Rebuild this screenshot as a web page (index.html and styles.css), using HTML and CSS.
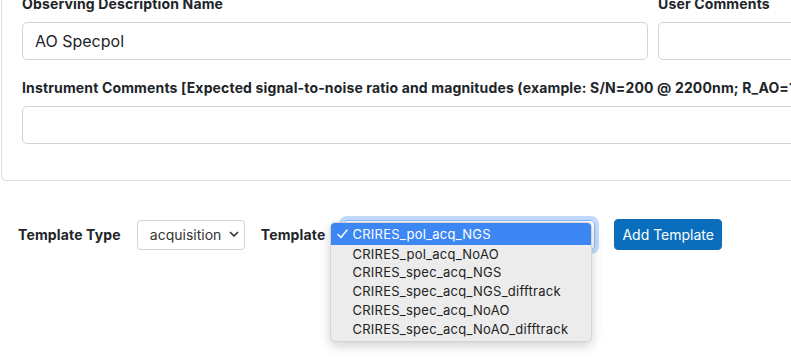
FILE: index.html
```html
<!DOCTYPE html>
<html>
  <head>
    <title>Observing Description</title>
    <link rel="stylesheet" href="styles.css">
  </head>
  <body>
    <div class="page">
      <div class="card">
        <div class="row">
          <div class="field name">
            <label>Observing Description Name</label>
            <div class="input">AO Specpol</div>
          </div>
          <div class="field user">
            <label>User Comments</label>
            <div class="input"></div>
          </div>
        </div>
        <div class="field comments">
          <label>Instrument Comments [Expected signal-to-noise ratio and magnitudes (example: S/N=200 @ 2200nm; R_AO=12; J=10)]</label>
          <div class="input"></div>
        </div>
      </div>

      <div class="toolbar">
        <label class="type-label">Template Type</label>
        <div class="select type-select">
          <span>acquisition</span>
          <svg width="10" height="7" viewBox="0 0 10 7"><path d="M1.5 1.5 L5 5 L8.5 1.5" fill="none" stroke="#333" stroke-width="1.7" stroke-linecap="round" stroke-linejoin="round"/></svg>
        </div>
        <label class="tpl-label">Template</label>
        <div class="select tpl-select">
          <span>CRIRES_pol_acq_NGS</span>
          <svg width="10" height="7" viewBox="0 0 10 7"><path d="M1.5 1.5 L5 5 L8.5 1.5" fill="none" stroke="#333" stroke-width="1.7" stroke-linecap="round" stroke-linejoin="round"/></svg>
          <ul class="menu">
            <li class="selected">
              <svg class="check" width="11" height="10" viewBox="0 0 11 10"><path d="M1 5.5 L4 8.5 L10 1" fill="none" stroke="#fff" stroke-width="1.5" stroke-linecap="round" stroke-linejoin="round"/></svg>
              CRIRES_pol_acq_NGS
            </li>
            <li>CRIRES_pol_acq_NoAO</li>
            <li>CRIRES_spec_acq_NGS</li>
            <li>CRIRES_spec_acq_NGS_difftrack</li>
            <li>CRIRES_spec_acq_NoAO</li>
            <li>CRIRES_spec_acq_NoAO_difftrack</li>
          </ul>
        </div>
        <button class="btn">Add Template</button>
      </div>
    </div>
  </body>
</html>
```

FILE: styles.css
```css
body{
    margin: 0;
    font-family: Inter, "Noto Sans", sans-serif;
    color: #212529;
    background: #fff;
}
.page{
    width: 791px;
    height: 357px;
    overflow: hidden;
}
.card{
    width: 1000px;
    margin: -28px 0 0 1px;
    padding: 20px 20px 36px 20px;
    border: 1px solid #dcdfe2;
    border-radius: 5px;
}
.row{
    display: flex;
    gap: 10px;
}
.field label{
    display: block;
    font-size: 14px;
    font-weight: 700;
    line-height: 21px;
    margin-bottom: 8px;
    letter-spacing: 0.15px;
    white-space: nowrap;
}
.name{
    width: 626px;
    flex: none;
}
.user{
    flex: 1;
}
.comments{
    margin-top: 17px;
}
.input{
    box-sizing: border-box;
    height: 38px;
    padding: 0 12px;
    border: 1px solid #ced4da;
    border-radius: 5px;
    font-size: 16px;
    line-height: 36px;
    color: #212529;
}
.toolbar{
    display: flex;
    align-items: center;
    padding: 38px 0 0 18px;
    font-size: 14px;
}
.toolbar label{
    font-weight: 700;
    letter-spacing: 0.15px;
}
.type-label{
    margin-right: 16px;
}
.tpl-label{
    margin: 0 18px 0 16px;
}
.select{
    box-sizing: border-box;
    position: relative;
    display: flex;
    align-items: center;
    justify-content: space-between;
    height: 30px;
    padding: 0 5px 0 12px;
    border: 1px solid #ced4da;
    border-radius: 4px;
    color: #333;
}
.type-select{
    width: 108px;
}
.tpl-select{
    width: 252px;
    border-color: #86b7fe;
    box-shadow: 0 0 0 4px rgba(13,110,253,.25);
}
.menu{
    position: absolute;
    left: -14px;
    top: 1px;
    z-index: 2;
    width: 262px;
    margin: 0;
    padding: 0 0 3px 0;
    list-style: none;
    box-sizing: border-box;
    background: #ececec;
    border: 1px solid #d4d4d4;
    border-radius: 5px;
    box-shadow: 0 4px 12px rgba(0,0,0,.18);
    font-size: 13px;
    letter-spacing: 0.25px;
    color: #222;
}
.menu li{
    height: 18.8px;
    line-height: 18.8px;
    padding-left: 21px;
    white-space: nowrap;
}
.menu li.selected{
    position: relative;
    height: 22px;
    line-height: 22px;
    background: #3d87f5;
    color: #fff;
    border-radius: 4px 4px 0 0;
}
.check{
    position: absolute;
    left: 6px;
    top: 6px;
}
.btn{
    margin-left: 19px;
    height: 31px;
    padding: 0 7px;
    border: 1px solid #0a6ebd;
    border-radius: 4px;
    background: #0a6ebd;
    color: #fff;
    font-family: inherit;
    font-size: 14px;
}
```
